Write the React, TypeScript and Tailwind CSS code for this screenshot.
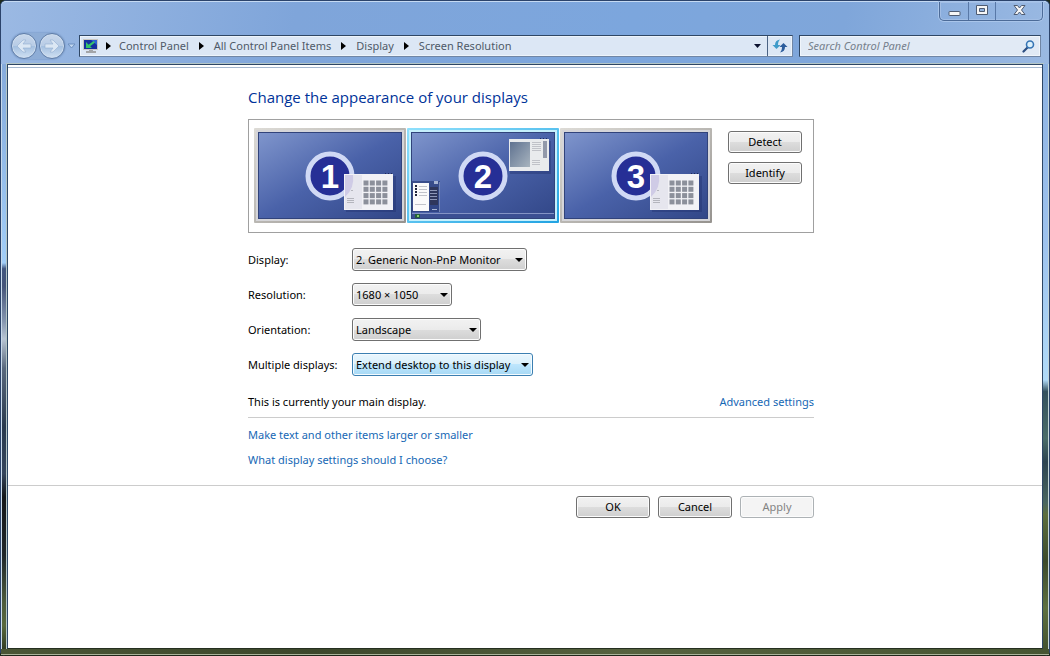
import { Fragment, ReactNode, useState } from "react";

const crumbs = [
  "Control Panel",
  "All Control Panel Items",
  "Display",
  "Screen Resolution",
];

const settings = [
  {
    id: "display",
    label: "Display:",
    width: "w-[175px]",
    options: [
      "2. Generic Non-PnP Monitor",
      "1. Generic Non-PnP Monitor",
      "3. Generic Non-PnP Monitor",
    ],
  },
  {
    id: "resolution",
    label: "Resolution:",
    width: "w-[100px]",
    options: ["1680 × 1050", "1280 × 1024", "1024 × 768"],
  },
  {
    id: "orientation",
    label: "Orientation:",
    width: "w-[129px]",
    options: ["Landscape", "Portrait"],
  },
  {
    id: "multiple",
    label: "Multiple displays:",
    width: "w-[181px]",
    hot: true,
    options: ["Extend desktop to this display", "Duplicate these displays"],
  },
];

type ButtonProps = {
  children: ReactNode;
  disabled?: boolean;
};

const Button = ({ children, disabled }: ButtonProps) => (
  <button
    type="button"
    disabled={disabled}
    className="flex h-[22px] w-[74px] items-center justify-center rounded-[3px] border border-[#707070] bg-[linear-gradient(#f2f2f2,#ebebeb_50%,#dddddd_50%,#cfcfcf)] shadow-[inset_0_0_0_1px_#fcfcfc] disabled:border-[#adb2b5] disabled:bg-[linear-gradient(#f4f4f4,#f4f4f4)] disabled:text-[#838383]"
  >
    {children}
  </button>
);

type SelectProps = {
  id: string;
  width: string;
  options: string[];
  hot?: boolean;
};

const Select = ({ id, width, options, hot }: SelectProps) => (
  <div className={`relative ${width}`}>
    <select
      id={id}
      className={`block h-[23px] w-full appearance-none rounded-[3px] border pl-[3px] leading-5 outline-none ${
        hot
          ? "border-[#3c7fb1] bg-[linear-gradient(#eaf6fd,#d9f0fc_50%,#bee6fd_50%,#a7d9f5)] shadow-[inset_0_0_0_1px_#f3fbff]"
          : "border-[#707070] bg-[linear-gradient(#f2f2f2,#ebebeb_50%,#dddddd_50%,#cfcfcf)] shadow-[inset_0_0_0_1px_#fcfcfc]"
      }`}
    >
      {options.map((option) => (
        <option key={option}>{option}</option>
      ))}
    </select>
    <svg
      className="pointer-events-none absolute top-[10px] right-1"
      width="8"
      height="4"
      viewBox="0 0 8 4"
      aria-hidden="true"
    >
      <path d="M0 0h8L4 4z" fill="#000" />
    </svg>
  </div>
);

const GridWindow = () => (
  <g>
    <rect x="92" y="48" width="50" height="36" fill="#1c2b66" opacity="0.35" />
    <rect x="90" y="46" width="49" height="36" fill="#f2f2f6" />
    <rect x="91" y="47" width="17" height="34" fill="#e6e6ee" />
    <path d="M91 47h8a25 25 0 0 1-8 22z" fill="#cfcbe6" />
    <path d="M131 45.500h1M134 45.500h1M137 45.500h1" stroke="#1f2b5c" />
    <path d="M93 70.500h7M93 72.500h7M93 74.500h7M97 62.500h2" stroke="#b4b5bd" />
    {[0, 1, 2, 3].map((row) =>
      [0, 1, 2, 3].map((col) => (
        <rect
          key={`${row}-${col}`}
          x={109.5 + col * 6.3}
          y={52.5 + row * 6.3}
          width="5"
          height="5"
          fill="#8c909b"
        />
      ))
    )}
  </g>
);

const DesktopWindows = () => (
  <g>
    <rect x="103" y="13" width="41" height="33" fill="#1c2b66" opacity="0.35" />
    <rect x="102" y="11" width="40" height="32" fill="#e9ebed" />
    <rect x="103" y="14" width="20" height="25" fill="url(#pane)" />
    <rect x="136" y="13" width="4" height="17" fill="#9299aa" />
    <path
      d="M125 14.500h9M125 16.500h9M125 18.500h9M125 20.500h9M125 22.500h9M125 32.500h8M125 34.500h8M125 36.500h8"
      stroke="#c0c2c8"
    />
    <path d="M133 10.500h1M136 10.500h1M139 10.500h1" stroke="#1f2b5c" />
    <rect x="5" y="53" width="28" height="31" fill="#23356f" opacity="0.6" />
    <path d="M32.500 54v30" stroke="#7385b5" />
    <rect x="27" y="53" width="4" height="3" fill="#a8b5d3" />
    <rect x="23" y="59" width="8" height="18" fill="#2f375c" />
    <path d="M23 62.500h7M23 65.500h7M23 68.500h7M23 71.500h7" stroke="#8f98b8" />
    <path d="M25 81.500h5" stroke="#a8b5d3" />
    <rect x="6" y="55" width="16" height="28" fill="#fafafa" />
    <path d="M8 58h2M8 61h2M8 64h2M8 67h2" stroke="#22273c" strokeWidth="2" />
    <path d="M12 58.500h8M12 61.500h8M12 64.500h8M12 67.500h8M8 76.500h11" stroke="#c1c3ca" />
    <path d="M5 85.500h142" stroke="#8494c5" />
    <rect x="5" y="86" width="142" height="4" fill="#3b5093" />
    <rect x="8" y="86" width="5" height="4" fill="#24603c" />
    <rect x="10" y="87" width="2" height="2" fill="#87cc6c" />
  </g>
);

type MonitorProps = {
  number: number;
  selected: boolean;
  onSelect: () => void;
};

const Monitor = ({ number, selected, onSelect }: MonitorProps) => (
  <button
    type="button"
    aria-label={`Display ${number}`}
    aria-pressed={selected}
    onClick={onSelect}
  >
    <svg className="block" width="152" height="95" viewBox="0 0 152 95">
      <defs>
        <linearGradient id={`screen${number}`} x1="0" y1="0" x2="1" y2="1">
          <stop offset="0" stopColor="#7f95cc" />
          <stop offset="0.5" stopColor="#4a62a9" />
          <stop offset="1" stopColor="#324788" />
        </linearGradient>
        <linearGradient id={`frame${number}`} x1="0" y1="0" x2="1" y2="1">
          <stop offset="0" stopColor={selected ? "#8fe0fc" : "#dddbd6"} />
          <stop offset="1" stopColor={selected ? "#22a3e2" : "#96938f"} />
        </linearGradient>
        <linearGradient id="pane" x1="0" y1="0" x2="1" y2="1">
          <stop offset="0" stopColor="#5f7290" />
          <stop offset="1" stopColor="#a8b4bf" />
        </linearGradient>
      </defs>
      <rect width="152" height="95" rx="1" fill={`url(#frame${number})`} />
      <rect
        x="2"
        y="2"
        width="148"
        height="91"
        fill={selected ? "#c5effc" : "#d5d5d9"}
      />
      <rect x="4" y="4" width="144" height="87" fill="#31437b" />
      <rect x="5" y="5" width="142" height="85" fill={`url(#screen${number})`} />
      {number === 2 && <DesktopWindows />}
      <circle cx="76" cy="48" r="22" fill="#262f96" stroke="#d0d9f5" strokeWidth="5" />
      {number !== 2 && <GridWindow />}
      <text
        x="76"
        y="60"
        textAnchor="middle"
        fill="#fff"
        className="font-['Liberation_Sans',sans-serif] text-[33px] font-bold"
      >
        {number}
      </text>
    </svg>
  </button>
);

const NavButtons = () => (
  <div className="flex h-7 items-center">
    <div className="flex gap-[2px] rounded-full bg-[#8eadd6] shadow-[0_0_2px_#5f80b2]">
      {["Back", "Forward"].map((name) => (
        <button
          key={name}
          type="button"
          aria-label={name}
          className="flex size-[26px] items-center justify-center rounded-full border border-[#5f7da8] bg-[linear-gradient(#c9d8eb,#b7cce6_50%,#a3bfe0_50%,#cfe0f2)] shadow-[inset_0_0_0_1px_#cfdeef]"
        >
          <svg width="16" height="14" viewBox="0 0 16 14" aria-hidden="true">
            <path
              d={
                name === "Back"
                  ? "M1 7l6-6h3L7 5h8v4H7l3 4H7z"
                  : "M15 7L9 1H6l3 4H1v4h8l-3 4h3z"
              }
              fill="#dbe7f4"
              stroke="#93aed2"
              strokeWidth="0.6"
            />
          </svg>
        </button>
      ))}
    </div>
    <button type="button" aria-label="Recent pages" className="ml-[2px]">
      <svg className="block" width="9" height="6" viewBox="0 0 9 6">
        <path d="M1 1h7L4.500 5z" fill="#c3d8f1" stroke="#6c8fbf" />
      </svg>
    </button>
  </div>
);

const AddressBar = () => (
  <div className="ml-[3px] flex h-[22px] flex-1 border border-[#7086a5] border-t-[#2f4765] border-l-[#2f4765] bg-[#dce7f5] shadow-[inset_0_0_0_1px_#edf4fb]">
    <nav className="flex flex-1 items-center pl-[3px] text-[#4f5a68]" aria-label="Address">
      <svg width="16" height="16" viewBox="0 0 16 16" aria-hidden="true">
        <rect x="0" y="1" width="15" height="11" fill="#c8c6c1" />
        <rect x="1" y="2" width="13" height="9" fill="#16309f" />
        <path d="M8 2h6v5z" fill="#2f63d6" />
        <path d="M3 4v6h6L7.200 8.300 12 4.500 10.500 3 5.500 6.800z" fill="#35c26c" />
        <path d="M6 12h4v1h3v2H3v-2h3z" fill="#a3a5a8" />
      </svg>
      {crumbs.map((crumb, index) => (
        <Fragment key={crumb}>
          <svg
            className={index === 0 ? "mr-2 ml-[7px]" : "mx-[10px]"}
            width="5"
            height="8"
            viewBox="0 0 5 8"
            aria-hidden="true"
          >
            <path d="M0 0v8l5-4z" fill="#000" />
          </svg>
          <a href="#">{crumb}</a>
        </Fragment>
      ))}
    </nav>
    <button
      type="button"
      aria-label="Previous locations"
      className="flex w-5 items-center justify-center"
    >
      <svg width="7" height="4" viewBox="0 0 7 4">
        <path d="M0 0h7L3.500 4z" fill="#0b1230" />
      </svg>
    </button>
    <button
      type="button"
      aria-label="Refresh"
      className="flex w-[25px] items-center justify-center border-l border-[#4b6384]"
    >
      <svg width="16" height="14" viewBox="0 0 16 14">
        <path
          d="M8 0.500C4.500 1 3 3 3 6H0.500l4 4 4-4H6C6 4 6.500 2 8 0.500z"
          fill="#3f9bc9"
        />
        <path
          d="M8 13.500c3.500-0.500 5-2.500 5-5.500h2.500l-4-4-4 4H10c0 2-0.500 4-2 5.500z"
          fill="#2b5c9c"
        />
      </svg>
    </button>
  </div>
);

const SearchBox = () => (
  <div className="ml-[6px] flex h-[22px] w-[242px] items-center border border-[#7086a5] border-t-[#2f4765] border-l-[#2f4765] bg-[#e1eaf5] pr-[5px] pl-2 shadow-[inset_0_0_0_1px_#f0f5fb]">
    <input
      type="text"
      aria-label="Search Control Panel"
      placeholder="Search Control Panel"
      className="min-w-0 flex-1 bg-transparent italic outline-none placeholder:text-[#76808c]"
    />
    <svg width="13" height="13" viewBox="0 0 13 13" aria-hidden="true">
      <path d="M5.500 7.500L1.500 11.500" stroke="#2c4f82" strokeWidth="2.200" strokeLinecap="round" />
      <circle cx="8" cy="4.500" r="3.500" fill="#dcf0fb" stroke="#3574b4" strokeWidth="1.600" />
    </svg>
  </div>
);

const WindowControls = () => (
  <div className="mr-[6px] flex h-[19px] self-end rounded-b-[5px] border border-t-0 border-[#4c6b98] shadow-[0_0_0_1px_#a9c5ea,inset_0_0_0_1px_#a2bee5]">
    <button type="button" aria-label="Minimize" className="flex w-7 items-center justify-center">
      <svg width="13" height="16" viewBox="0 0 13 16">
        <rect x="1" y="8.500" width="11" height="4" rx="0.500" fill="#f6f6f6" stroke="#4f5c72" />
      </svg>
    </button>
    <button
      type="button"
      aria-label="Restore"
      className="flex w-[27px] items-center justify-center border-l border-[#5878a7]"
    >
      <svg width="12" height="16" viewBox="0 0 12 16">
        <path
          d="M0.500 2.500h11v9H0.500zM3.500 5.500v3h5v-3z"
          fill="#f6f6f6"
          fillRule="evenodd"
          stroke="#4f5c72"
        />
      </svg>
    </button>
    <button
      type="button"
      aria-label="Close"
      className="flex w-[47px] items-center justify-center border-l border-[#5878a7]"
    >
      <svg width="13" height="16" viewBox="0 0 13 16">
        <path
          d="M1 2.500h3.500l2 2.500 2-2.500H12L8.500 7l3.500 4.500H8.500l-2-2.500-2 2.500H1L4.500 7z"
          fill="#f6f6f6"
          stroke="#4f5c72"
        />
      </svg>
    </button>
  </div>
);

const App = () => {
  const [selected, setSelected] = useState(2);

  return (
    <div className="flex min-h-screen flex-col overflow-hidden bg-[#1f2a1c] font-['Noto_Sans','Open_Sans',sans-serif] text-[11px] leading-4 text-black">
      <div className="flex flex-1 flex-col rounded-t-[6px] rounded-b-[5px] border border-[#2b436b] border-b-[#20281a] bg-[#7da6db]">
        <header className="flex flex-col rounded-t-[5px] border-t border-[#c5daf3] bg-[linear-gradient(100deg,#9bb9e3,#7fa5da_28%,#7ca6dd_60%,#7fa6da_80%,#9ab9e2)]">
          <WindowControls />
          <div className="flex items-center pt-[11px] pr-2 pb-[4px] pl-[10px]">
            <NavButtons />
            <AddressBar />
            <SearchBox />
          </div>
        </header>

        <div className="flex flex-1">
          <div className="w-[6px] border-l border-[#c7d9ea] bg-[linear-gradient(#86abdc,#a1cdf7_34%,#41567f_35%,#45557a_38%,#8596b0_44%,#b8c5d4_47%,#59697e_52%,#2a3a4e_62%,#35455c_70%,#14171a_74%,#20262a_84%,#4d5b3c_92%,#59683d_96%,#333e25)]" />
          <main className="flex flex-1 flex-col border border-[#2d4665] border-b-[#252f20] bg-white shadow-[0_0_0_1px_#b4c6c6]">
            <div className="border-b border-[#a5b8d0] pt-[2px]" />
            <div className="w-full max-w-[806px] pl-60">
              <h1 className="pt-[19px] text-[15px] leading-5 text-[#003399] font-['Open_Sans',sans-serif]">
                Change the appearance of your displays
              </h1>
              <div className="mt-3 flex justify-between border border-[#a0a0a0] pt-2 pr-[11px] pb-[9px] pl-[5px]">
                <div className="flex gap-px">
                  {[1, 2, 3].map((number) => (
                    <Monitor
                      key={number}
                      number={number}
                      selected={selected === number}
                      onSelect={() => setSelected(number)}
                    />
                  ))}
                </div>
                <div className="flex flex-col gap-[9px] pt-[3px]">
                  <Button>Detect</Button>
                  <Button>Identify</Button>
                </div>
              </div>

              <div className="mt-[15px] flex flex-col gap-3">
                {settings.map(({ id, label, ...rest }) => (
                  <div key={id} className="flex items-center">
                    <label htmlFor={id} className="w-[104px]">
                      {label}
                    </label>
                    <Select id={id} {...rest} />
                  </div>
                ))}
              </div>

              <div className="mt-[18px] flex justify-between border-b border-[#cccccc] pb-[7px]">
                <p>This is currently your main display.</p>
                <a href="#" className="text-[#1668b5]">
                  Advanced settings
                </a>
              </div>
              <div className="flex flex-col items-start gap-[9px] pt-[9px] pb-[17px] text-[#1668b5]">
                <a href="#">Make text and other items larger or smaller</a>
                <a href="#">What display settings should I choose?</a>
              </div>
            </div>

            <footer className="border-t border-[#cccccc] pt-[10px]">
              <div className="flex w-full max-w-[806px] justify-end gap-2">
                <Button>OK</Button>
                <Button>Cancel</Button>
                <Button disabled>Apply</Button>
              </div>
            </footer>
          </main>
          <div className="w-[6px] border-r border-[#c3d5d8] bg-[linear-gradient(#8db2e2,#9dc2ee_30%,#b0daf8_54%,#34515d_56%,#4b6d69_64%,#2d4450_68%,#4a6660_75%,#5d6f3e_77%,#3d4b2b_85%,#5e7141_93%,#44532f)]" />
        </div>
        <div className="h-[6px] border-b border-[#a9b39a] bg-[linear-gradient(90deg,#4a5636,#3c472b_30%,#56623f_60%,#465532)]" />
      </div>
    </div>
  );
};

export default App;
